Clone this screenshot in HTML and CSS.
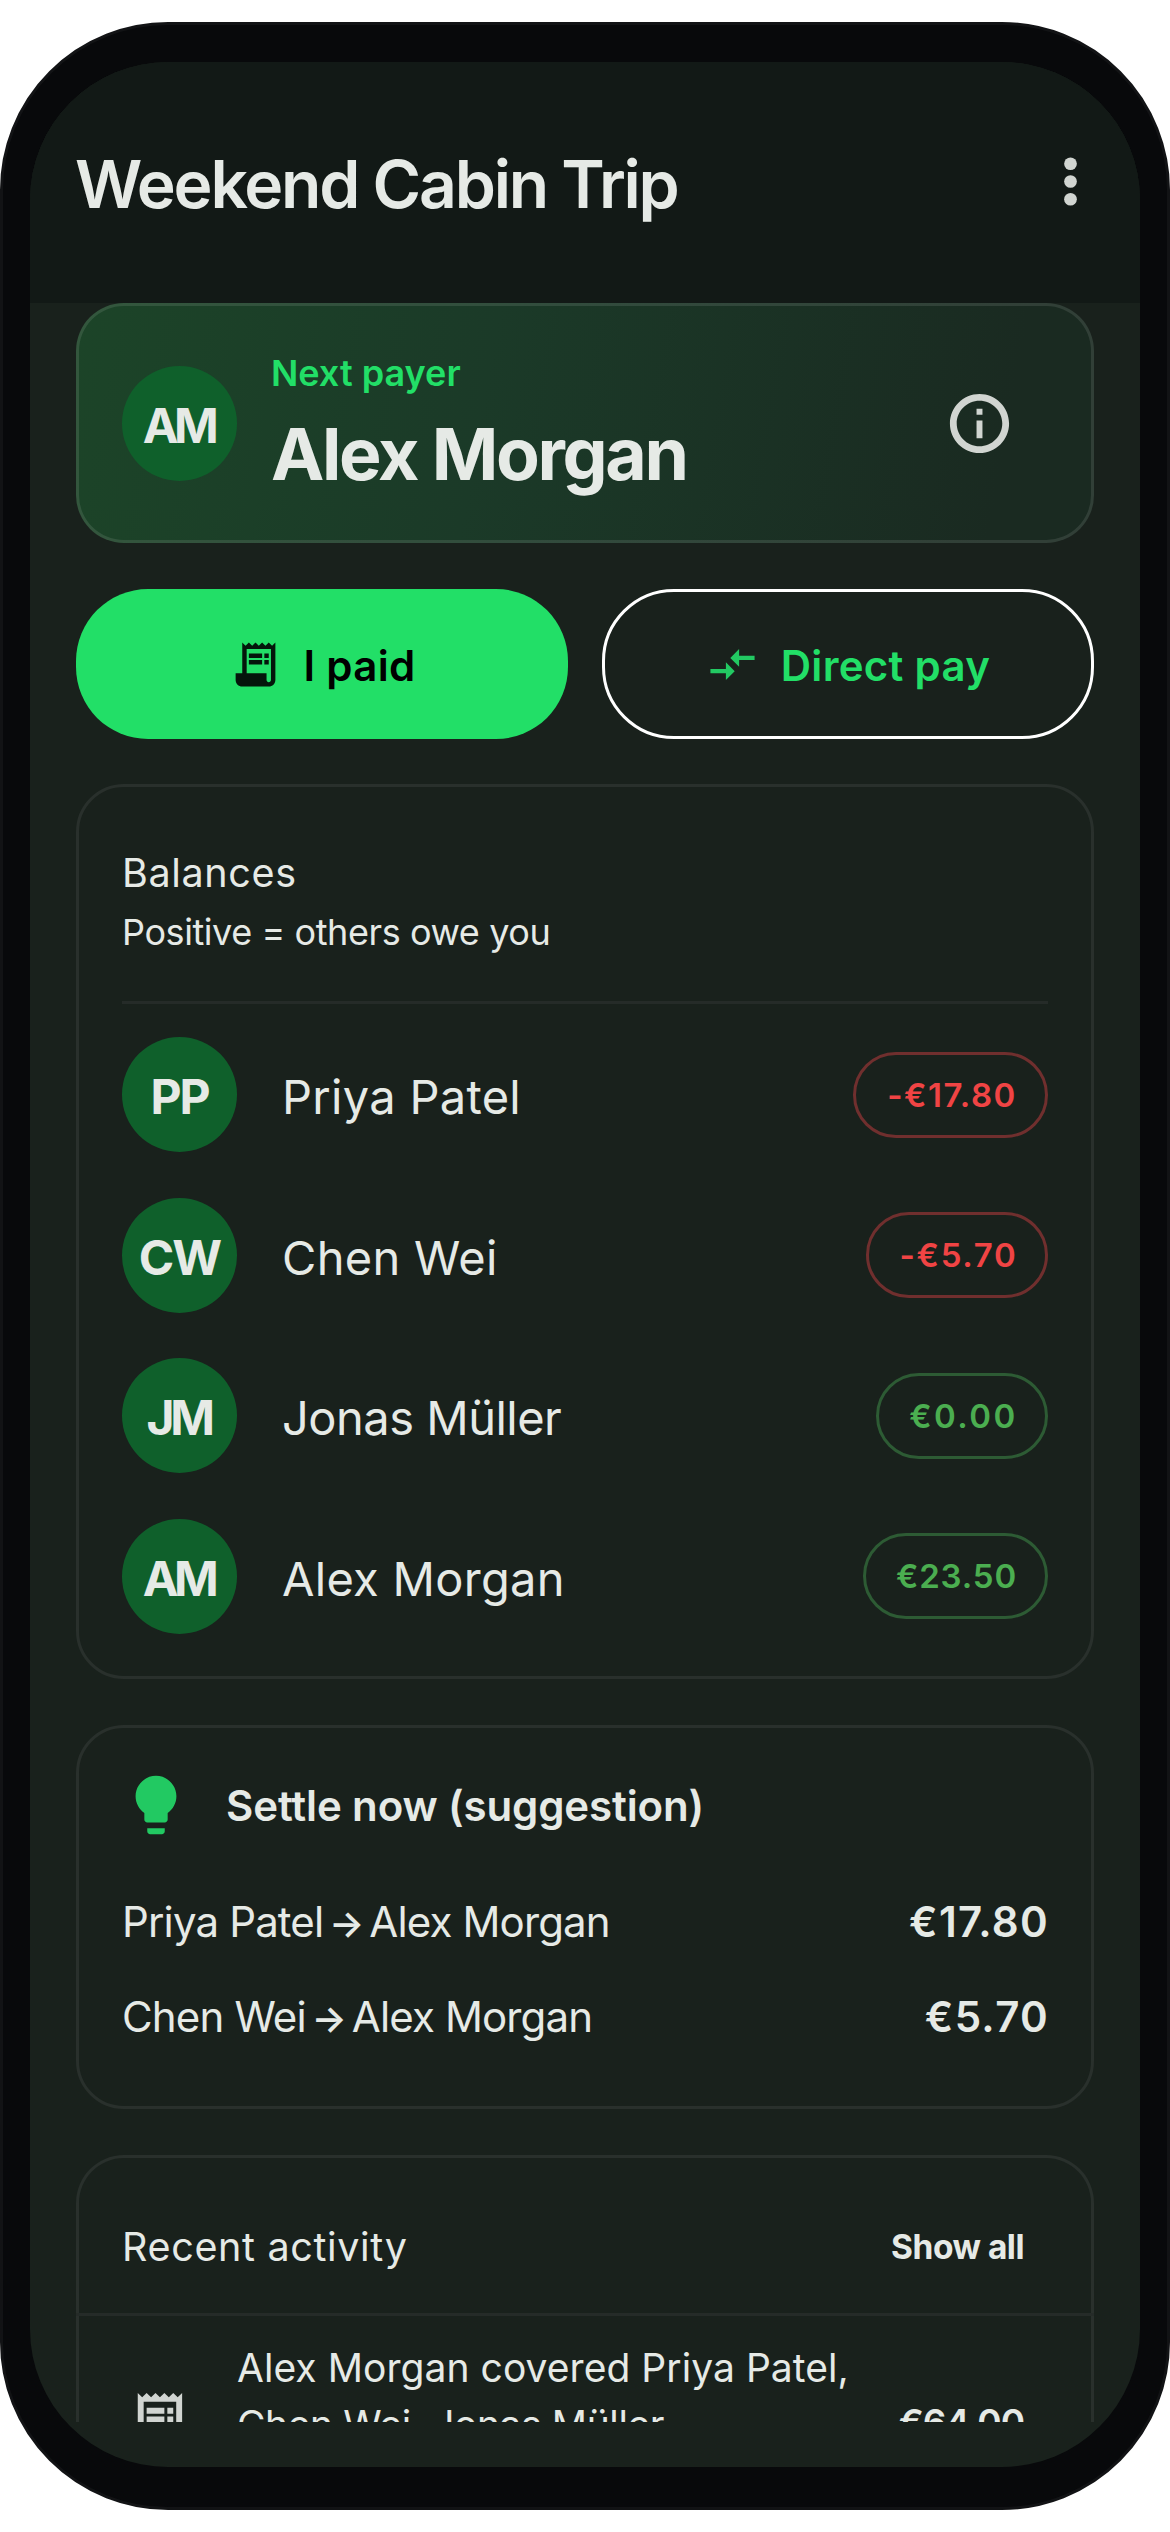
FILE: index.html
```
<!DOCTYPE html>
<html lang="en">
<head>
<meta charset="utf-8">
<title>Weekend Cabin Trip</title>
<link rel="stylesheet" href="styles.css">
</head>
<body>
<div class="device">
  <div class="screen">
    <header class="topbar">
      <h1 class="topbar-title">Weekend Cabin Trip</h1>
      <svg class="icon-menu" viewBox="0 0 24 24"><circle cx="12" cy="6" r="2.15"/><circle cx="12" cy="12" r="2.15"/><circle cx="12" cy="18" r="2.15"/></svg>
    </header>
    <main class="content">
      <section class="hero">
        <div class="avatar avatar-tight">AM</div>
        <div class="hero-text">
          <div class="hero-label">Next payer</div>
          <div class="hero-name">Alex Morgan</div>
        </div>
        <svg class="icon-info" viewBox="0 0 24 24"><path d="M11 7h2v2h-2zm0 4h2v6h-2zm1-9C6.48 2 2 6.48 2 12s4.48 10 10 10 10-4.48 10-10S17.52 2 12 2zm0 17.7c-4.24 0-7.7-3.46-7.7-7.7s3.46-7.7 7.7-7.7 7.7 3.46 7.7 7.7-3.46 7.7-7.7 7.7z"/></svg>
      </section>

      <div class="actions">
        <button class="btn btn-primary">
          <svg class="btn-icon" viewBox="0 0 24 24"><path d="M19.5 3.5 18 2l-1.5 1.5L15 2l-1.5 1.5L12 2l-1.5 1.5L9 2 7.5 3.5 6 2v14H3v3c0 1.66 1.34 3 3 3h12c1.66 0 3-1.34 3-3V2l-1.5 1.5zM19 19c0 .55-.45 1-1 1s-1-.45-1-1v-3H8V5h11v14z"/><path d="M9 7h6v2H9zm7 0h2v2h-2zM9 10h6v2H9zm7 0h2v2h-2z"/></svg>
          <span>I paid</span>
        </button>
        <button class="btn btn-outline">
          <svg class="btn-icon" viewBox="0 0 24 24"><path d="M9.01 14H2v2h7.01v3L13 15l-3.99-4v3zm5.98-1v-3H22V8h-7.01V5L11 9l3.99 4z"/></svg>
          <span>Direct pay</span>
        </button>
      </div>

      <section class="card balances">
        <h2 class="card-title">Balances</h2>
        <p class="card-sub">Positive = others owe you</p>
        <ul class="people">
          <li class="person"><div class="avatar">PP</div><span class="person-name">Priya Patel</span><span class="chip chip-neg">-€17.80</span></li>
          <li class="person"><div class="avatar">CW</div><span class="person-name">Chen Wei</span><span class="chip chip-neg">-€5.70</span></li>
          <li class="person"><div class="avatar avatar-tight">JM</div><span class="person-name">Jonas Müller</span><span class="chip chip-pos">€0.00</span></li>
          <li class="person"><div class="avatar avatar-tight">AM</div><span class="person-name">Alex Morgan</span><span class="chip chip-pos">€23.50</span></li>
        </ul>
      </section>

      <section class="card settle">
        <div class="settle-head">
          <svg class="icon-bulb" viewBox="0 0 24 24"><path d="M9 21c0 .55.45 1 1 1h4c.55 0 1-.45 1-1v-1H9v1zm3-19C8.14 2 5 5.14 5 9c0 2.38 1.19 4.47 3 5.74V17c0 .55.45 1 1 1h6c.55 0 1-.45 1-1v-2.26c1.81-1.27 3-3.36 3-5.74 0-3.86-3.14-7-7-7z"/></svg>
          <h2 class="settle-title">Settle now (suggestion)</h2>
        </div>
        <div class="transfer"><span class="transfer-names">Priya Patel<span class="arrow">→</span>Alex Morgan</span><span class="transfer-sum">€17.80</span></div>
        <div class="transfer"><span class="transfer-names">Chen Wei<span class="arrow">→</span>Alex Morgan</span><span class="transfer-sum">€5.70</span></div>
      </section>

      <section class="card activity">
        <div class="activity-head">
          <h2 class="card-title">Recent activity</h2>
          <a class="show-all">Show all</a>
        </div>
        <div class="entry">
          <svg class="entry-icon" viewBox="0 0 24 24"><path d="M19.5 3.5 18 2l-1.5 1.5L15 2l-1.5 1.5L12 2l-1.5 1.5L9 2 7.5 3.5 6 2v14H3v3c0 1.66 1.34 3 3 3h12c1.66 0 3-1.34 3-3V2l-1.5 1.5zM19 19c0 .55-.45 1-1 1s-1-.45-1-1v-3H8V5h11v14z"/><path d="M9 7h6v2H9zm7 0h2v2h-2zM9 10h6v2H9zm7 0h2v2h-2z"/></svg>
          <p class="entry-text">Alex Morgan covered Priya Patel,<br><span class="entry-more">Chen Wei, Jonas Müller</span></p>
          <span class="entry-sum">€64.00</span>
        </div>
      </section>
    </main>
  </div>
</div>
</body>
</html>
```
FILE: styles.css
```
* { box-sizing: border-box; margin: 0; padding: 0; }

:root {
  --text: #e6eae6;
  --muted: #d1d5d1;
  --accent: #22df67;
  --surface: #19211c;
  --line: #29302c;
}

body {
  width: 1170px;
  height: 2532px;
  overflow: hidden;
  background: #fff;
  color: var(--text);
  font-family: Inter, "Liberation Sans", sans-serif;
  padding-top: 22px;
}

h1, h2 { font-weight: 400; }
svg { display: block; flex: none; fill: currentColor; }

.device {
  height: 2488px;
  padding: 37px 27px 40px;
  border: 3px solid #121315;
  border-radius: 168px;
  background: #08090b;
}

.screen {
  height: 2405px;
  border-radius: 138px;
  overflow: hidden;
  background: var(--surface);
}

.topbar {
  height: 241px;
  padding: 72px 34px 0 46px;
  display: flex;
  justify-content: space-between;
  background: #121916;
}
.topbar-title {
  margin-left: -1px;
  font-size: 66px;
  line-height: 100px;
  font-weight: 600;
  letter-spacing: -2.22px;
}
.icon-menu { width: 71px; height: 71px; margin-top: 12px; color: var(--muted); }

.content {
  height: 2119px;
  padding: 0 46px;
  overflow: hidden;
  display: flex;
  flex-direction: column;
}
.content > * { flex: none; }

.avatar {
  width: 115px;
  height: 115px;
  flex: none;
  padding-top: 4px;
  border-radius: 50%;
  display: flex;
  align-items: center;
  justify-content: center;
  background: #0f602b;
  font-size: 48px;
  font-weight: 700;
  letter-spacing: -2px;
}
.avatar-tight { padding-right: 2px; letter-spacing: -4.5px; }

.hero {
  height: 240px;
  padding: 0 76px 0 43px;
  display: flex;
  align-items: center;
  border: 3px solid rgba(255, 255, 255, .1);
  border-radius: 48px;
  background: linear-gradient(100deg, #1c4428 0%, #1b3a28 40%, #1a2a21 90%) border-box;
}
.hero-text { flex: 1; margin-left: 34px; padding-top: 2px; }
.hero-label {
  font-size: 36px;
  line-height: 60px;
  font-weight: 600;
  color: var(--accent);
}
.hero-name {
  font-size: 71.5px;
  line-height: 102px;
  font-weight: 700;
  letter-spacing: -2.33px;
}
.icon-info { width: 71px; height: 71px; color: var(--muted); }

.actions { display: grid; grid-template-columns: 492px 492px; gap: 34px; margin-top: 46px; }
.btn {
  height: 150px;
  display: flex;
  align-items: center;
  justify-content: center;
  gap: 22px;
  border: 0;
  border-radius: 72px;
  font: 600 42px Inter, "Liberation Sans", sans-serif;
  letter-spacing: .3px;
}
.btn span { padding-top: 3px; }
.btn-icon { width: 53px; height: 53px; }
.btn-primary { background: var(--accent); color: #000; }
.btn-primary .btn-icon { color: #04160b; }
.btn-outline { background: none; border: 3px solid #fff; color: var(--accent); }
.btn-outline .btn-icon { color: #22c962; }

.card { border: 3px solid var(--line); border-radius: 48px; }
.card-title { font-size: 39.5px; line-height: 56px; letter-spacing: .65px; }

.balances { margin-top: 45px; height: 895px; padding: 58px 43px 0; }
.card-sub { font-size: 36px; line-height: 62px; letter-spacing: -.42px; }
.people {
  margin-top: 38px;
  padding-top: 33px;
  border-top: 3px solid #252b28;
  list-style: none;
  display: flex;
  flex-direction: column;
  gap: 45.5px;
}
.person { display: flex; align-items: center; }
.person-name {
  flex: 1;
  margin-left: 45px;
  padding-top: 5px;
  font-size: 47px;
  line-height: 60px;
  letter-spacing: .3px;
}
.person:nth-child(3) .person-name { letter-spacing: -.5px; }
.chip {
  height: 86px;
  display: flex;
  align-items: center;
  justify-content: center;
  border: 3px solid;
  border-radius: 43px;
  font-size: 33px;
  font-weight: 600;
}
.chip-neg { color: #f04444; border-color: #702f2e; }
.chip-pos { color: #4bae50; border-color: #2d5b34; }
.person:nth-child(1) .chip { width: 195px; padding-left: 3px; letter-spacing: 1.5px; }
.person:nth-child(2) .chip { width: 182px; padding-left: 3px; letter-spacing: 1.7px; }
.person:nth-child(3) .chip { width: 172px; padding-left: 3px; letter-spacing: 2.4px; }
.person:nth-child(4) .chip { width: 185px; padding-left: 2px; letter-spacing: .86px; }

.settle { margin-top: 46px; height: 384px; padding: 42px 43px 0; }
.settle-head { display: flex; align-items: center; margin: 0 0 34px -1px; }
.icon-bulb { width: 70px; height: 70px; color: #22c962; }
.settle-title { margin-left: 35px; padding-top: 2px; font-size: 42px; line-height: 60px; font-weight: 600; letter-spacing: -.13px; }
.transfer { display: flex; justify-content: space-between; font-size: 42px; line-height: 95px; }
.transfer-names { letter-spacing: -.85px; }
.arrow {
  display: inline-block;
  width: 46px;
  text-align: center;
  font-size: 37px;
  font-weight: 600;
  line-height: 1;
}
.transfer-sum { margin-right: -1px; font-weight: 600; letter-spacing: 1.3px; }

.activity { margin-top: 46px; height: 500px; border-bottom: 0; border-radius: 48px 48px 0 0; }
.activity-head {
  height: 158px;
  margin: 0 -3px;
  padding: 22px 70px 0 46px;
  display: flex;
  align-items: center;
  justify-content: space-between;
  border-bottom: 3px solid #252b28;
}
.show-all { font-size: 33.5px; font-weight: 700; letter-spacing: -.5px; }
.entry {
  height: 166px;
  margin-top: 23px;
  padding: 0 67px 0 41px;
  display: flex;
  align-items: center;
}
.entry-icon { width: 71px; height: 71px; color: var(--muted); }
.entry-text { flex: 1; align-self: flex-start; margin-left: 46px; font-size: 39px; line-height: 57px; letter-spacing: .05px; }
.entry-more { letter-spacing: -.4px; }
.entry-sum { font-size: 37px; font-weight: 600; letter-spacing: -1.07px; }
```
